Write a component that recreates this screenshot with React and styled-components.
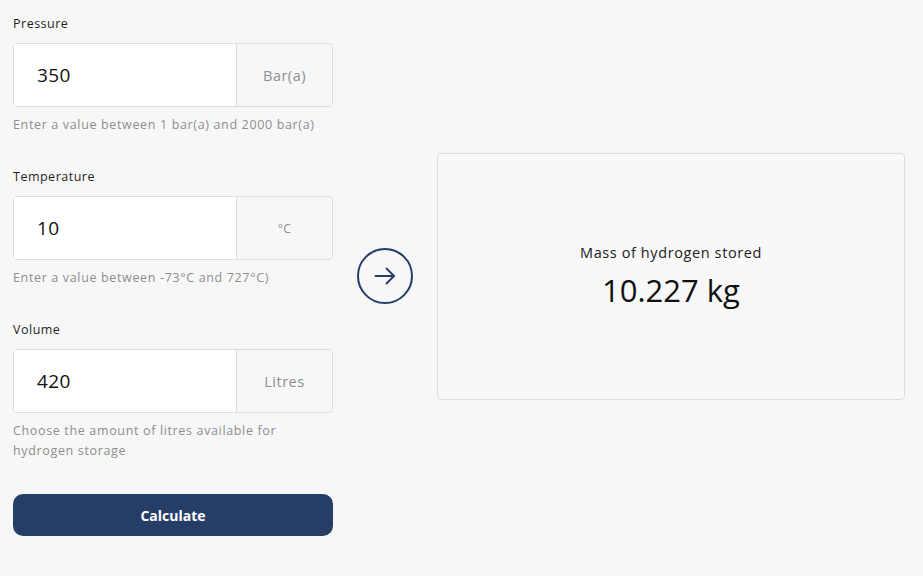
import React, { useState } from 'react';
import styled, { createGlobalStyle } from 'styled-components';

const GlobalStyle = createGlobalStyle`
  html, body {
    margin: 0;
    padding: 0;
    background: #f7f7f7;
    font-family: "Open Sans", "Noto Sans", sans-serif;
    color: #1b1b1b;
  }
  * { box-sizing: border-box; }
`;

const fields = [
  { label: 'Pressure', value: '350', unit: 'Bar(a)', hint: 'Enter a value between 1 bar(a) and 2000 bar(a)' },
  { label: 'Temperature', value: '10', unit: '°C', hint: 'Enter a value between -73°C and 727°C)', small: true },
  { label: 'Volume', value: '420', unit: 'Litres', hint: 'Choose the amount of litres available for hydrogen storage' },
];

const App = () => {
  const [values, setValues] = useState(fields.map((f) => f.value));

  return (
    <>
      <GlobalStyle />
      <Page>
        <Form>
          {fields.map((f, i) => (
            <Field key={f.label}>
              <Label>{f.label}</Label>
              <InputGroup>
                <Input
                  value={values[i]}
                  onChange={(e) => setValues(values.map((v, j) => (j === i ? e.target.value : v)))}
                />
                <Unit $small={f.small}>{f.unit}</Unit>
              </InputGroup>
              <Hint>{f.hint}</Hint>
            </Field>
          ))}
          <Button>Calculate</Button>
        </Form>
        <ArrowCircle>
          <svg width="22" height="18" viewBox="0 0 22 18" fill="none" stroke="#263d66" strokeWidth="1.8" strokeLinecap="round" strokeLinejoin="round">
            <path d="M1.5 9h18.5" />
            <path d="M12.5 1.5L20 9l-7.5 7.5" />
          </svg>
        </ArrowCircle>
        <ResultCard>
          <ResultLabel>Mass of hydrogen stored</ResultLabel>
          <ResultValue>10.227 kg</ResultValue>
        </ResultCard>
      </Page>
    </>
  );
};

const Page = styled.div`
  display: flex;
  align-items: center;
  gap: 24px;
  padding: 16px 13px 15px;
`;

const Form = styled.div`
  width: 320px;
  display: flex;
  flex-direction: column;
  gap: 34px;
`;

const Field = styled.div`
  display: flex;
  flex-direction: column;
`;

const Label = styled.label`
  font-size: 12.5px;
  line-height: 16px;
  letter-spacing: 0.5px;
  color: #1f1f1f;
  margin-bottom: 11px;
`;

const InputGroup = styled.div`
  display: flex;
  height: 64px;
  border: 1px solid #dcdcdc;
  border-radius: 4px;
  overflow: hidden;
  background: #fff;
`;

const Input = styled.input`
  flex: 1;
  min-width: 0;
  border: none;
  outline: none;
  background: #fff;
  padding: 0 0 0 23px;
  font-family: inherit;
  font-size: 19px;
  letter-spacing: 0.4px;
  color: #111;
`;

const Unit = styled.div`
  width: 96px;
  display: flex;
  align-items: center;
  justify-content: center;
  border-left: 1px solid #dcdcdc;
  background: #f7f7f7;
  color: #8a8f96;
  letter-spacing: 0.5px;
  font-size: ${(p) => (p.$small ? '12px' : '14.5px')};
`;

const Hint = styled.p`
  margin: 8px 0 0;
  font-size: 12.5px;
  line-height: 20px;
  letter-spacing: 0.65px;
  color: #8e8e8e;
`;

const Button = styled.button`
  height: 42px;
  margin-top: -1px;
  border: none;
  border-radius: 10px;
  background: #263d66;
  color: #fff;
  font-family: inherit;
  font-weight: 700;
  font-size: 14px;
  cursor: pointer;
`;

const ArrowCircle = styled.div`
  flex: none;
  width: 56px;
  height: 56px;
  border: 2px solid #263d66;
  border-radius: 50%;
  display: flex;
  align-items: center;
  justify-content: center;
`;

const ResultCard = styled.div`
  width: 468px;
  height: 247px;
  border: 1px solid #dcdcdc;
  border-radius: 4px;
  background: #f8f8f8;
  display: flex;
  flex-direction: column;
  align-items: center;
  justify-content: center;
  gap: 9px;
`;

const ResultLabel = styled.div`
  font-size: 14.5px;
  line-height: 18px;
  letter-spacing: 0.6px;
  color: #1b1b1b;
`;

const ResultValue = styled.div`
  font-size: 31px;
  line-height: 38px;
  color: #111;
`;

export default App;
